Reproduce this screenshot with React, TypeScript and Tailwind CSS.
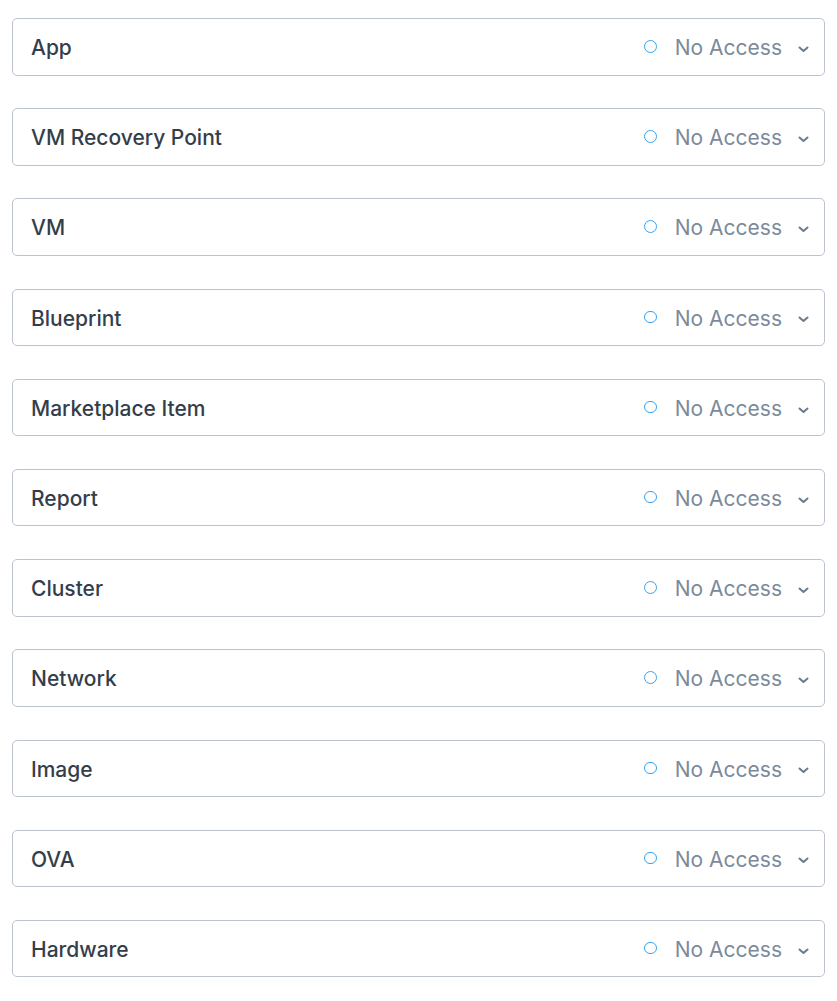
const entities = [
  "App",
  "VM Recovery Point",
  "VM",
  "Blueprint",
  "Marketplace Item",
  "Report",
  "Cluster",
  "Network",
  "Image",
  "OVA",
  "Hardware",
];

function Chevron() {
  return (
    <svg width="11" height="7" viewBox="0 0 11 7" className="text-[#6b7a8d]">
      <path d="M1.5 1.5 L5.5 5 L9.5 1.5" fill="none" stroke="currentColor" strokeWidth="2" strokeLinecap="round" strokeLinejoin="round" />
    </svg>
  );
}

export default function App() {
  return (
    <div className="min-h-screen bg-white px-[12px] pt-[18px] font-['Inter',sans-serif]">
      <div className="flex flex-col gap-[32.7px]">
        {entities.map((name) => (
          <div
            key={name}
            className="flex h-[57.5px] items-center justify-between rounded-[5px] border border-[#bcc3cf] bg-white pl-[18px] pr-[15px] pt-[2px]"
          >
            <span className="text-[21px] font-medium text-[#343e4b]">{name}</span>
            <div className="flex items-center">
              <span className="mb-[3px] h-[12.5px] w-[12.5px] rounded-full border-[1.6px] border-[#36a3f0]" />
              <span className="ml-[18px] text-[21px] text-[#7b8a9b]">No Access</span>
              <span className="ml-[16px] mt-[3px] flex">
                <Chevron />
              </span>
            </div>
          </div>
        ))}
      </div>
    </div>
  );
}
